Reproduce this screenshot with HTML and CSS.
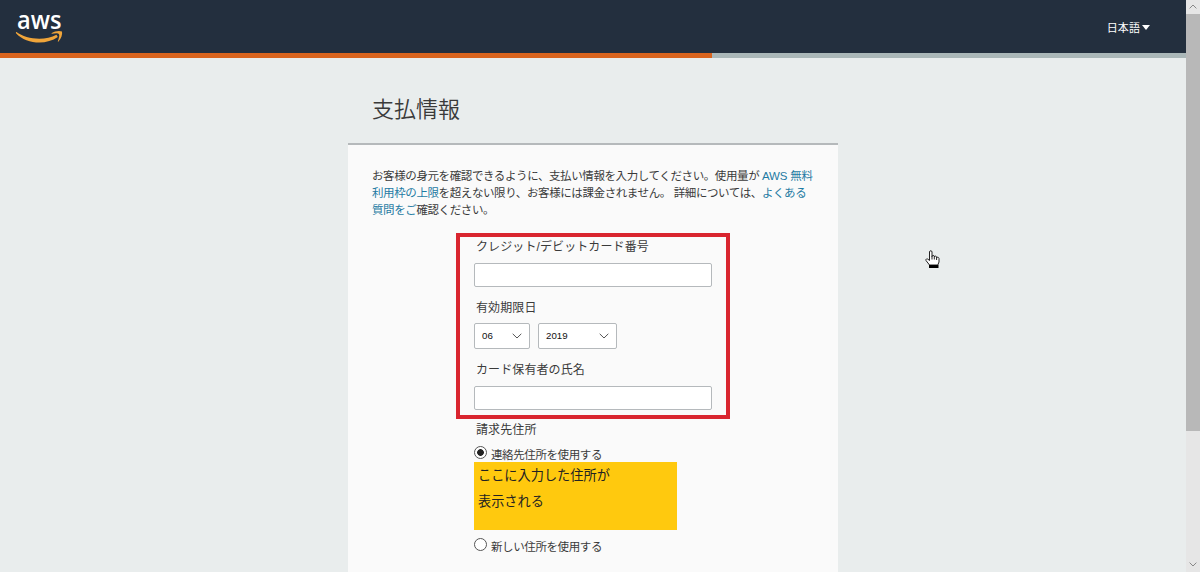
FILE: index.html
```
<!DOCTYPE html>
<html lang="ja">
<head>
    <meta charset="UTF-8">
    <title>支払情報</title>
    <link rel="stylesheet" href="styles.css">
</head>
<body>
<div class="page">
    <header class="header">
        <svg class="logo" viewBox="0 0 48 32" width="48" height="32">
            <text x="1" y="16.6" textLength="44.5" lengthAdjust="spacingAndGlyphs">aws</text>
            <path class="smile" d="M.5 20C10 27.5 29 29 40.5 22.8L41.8 25C30 33.5 10 32 0 21.2C-.2 20.4 0 19.8 .5 20Z"/>
            <path class="smile" d="M35.5 21.2C39 18.7 44 18.3 46 19.6C46.6 22.3 45.3 26.8 42.5 29.5C41.9 29.9 41.6 29.6 41.9 28.9C42.7 26.9 43.8 23.6 43 22.2C42.2 20.8 38.2 21.4 36.2 21.7C35.5 21.8 35.2 21.5 35.5 21.2Z"/>
        </svg>
        <div class="language">日本語<span class="caret"></span></div>
    </header>
    <div class="progress"><div class="progress-done" style="width: 712px"></div></div>
    <main class="content">
        <h1>支払情報</h1>
        <div class="card">
            <p class="intro">お客様の身元を確認できるように、支払い情報を入力してください。使用量が <a class="wide">AWS 無料</a><br><a>利用枠の上限</a>を超えない限り、お客様には課金されません。 詳細については、<a>よくある</a><br><a>質問をご</a>確認ください。</p>
            <form class="form">
                <label class="label">クレジット/デビットカード番号</label>
                <div class="input"></div>
                <label class="label label-date">有効期限日</label>
                <div class="selects">
                    <div class="select month">06<svg width="10" height="6" viewBox="0 0 10 6"><path d="M.7.8L5 5L9.3.8"/></svg></div>
                    <div class="select year">2019<svg width="10" height="6" viewBox="0 0 10 6"><path d="M.7.8L5 5L9.3.8"/></svg></div>
                </div>
                <label class="label label-name">カード保有者の氏名</label>
                <div class="input"></div>
                <label class="label label-address">請求先住所</label>
                <div class="radio"><span class="dot checked"></span>連絡先住所を使用する</div>
                <div class="address">ここに入力した住所が<br>表示される</div>
                <div class="radio radio-new"><span class="dot"></span>新しい住所を使用する</div>
                <div class="highlight"></div>
            </form>
        </div>
    </main>
</div>
<div class="scrollbar">
    <svg width="8" height="5" viewBox="0 0 8 5"><path d="M.6 4.4L4 1L7.4 4.4"/></svg>
    <div class="thumb"></div>
    <svg class="down" width="8" height="5" viewBox="0 0 8 5"><path d="M.6.6L4 4L7.4.6"/></svg>
</div>
<svg class="cursor" width="16" height="19" viewBox="0 0 16 19">
    <path class="hand" d="M4.5 10.5V2C4.5.3 7 .3 7 2V6.5C7 5 9.3 5 9.3 6.5V7C9.3 5.7 11.6 5.8 11.6 7.2V8C11.6 6.8 14 7 14 8.5V12L12.8 15H4.5L1 10.5C.4 9.2 2 8.2 3 9.3Z"/>
    <path class="folds" d="M7 6V9.5M9.3 6.5V9.5M11.6 7.5V10"/>
    <path d="M4 15H13.5V18H4Z"/>
</svg>
</body>
</html>
```
FILE: styles.css
```
* {
    box-sizing: border-box;
}
body {
    margin: 0;
    height: 572px;
    display: flex;
    overflow: hidden;
    background: #e9eded;
    color: #3a3a3a;
    font-family: "Liberation Sans", "Noto Sans CJK JP", sans-serif;
}
.page {
    flex: 1;
    height: 572px;
    overflow: hidden;
}
.header {
    height: 53px;
    display: flex;
    justify-content: space-between;
    align-items: flex-start;
    padding: 12px 36px 0 16px;
    background: #232f3e;
}
.logo {
    display: block;
    overflow: visible;
}
.logo text {
    font: 600 26px "Open Sans", sans-serif;
    fill: #fff;
}
.smile {
    fill: #f0a53a;
}
.language {
    display: flex;
    align-items: center;
    height: 30px;
    color: #fff;
    font-size: 11px;
    letter-spacing: 0.1px;
}
.caret {
    margin-left: 2px;
    border: 4px solid transparent;
    border-top: 5px solid #fff;
    border-bottom: 0;
}
.progress {
    height: 5px;
    background: #aab7b8;
}
.progress-done {
    height: 5px;
    background: #d9641e;
}
.content {
    width: 490px;
    margin-left: 348px;
}
h1 {
    margin: 0;
    height: 85px;
    padding: 36px 24px 0;
    font-size: 22px;
    line-height: 32px;
    font-weight: 350;
}
.card {
    height: 440px;
    padding: 23px 0 0 24px;
    border-top: 2px solid #b5b9bb;
    background: #fafafa;
}
.intro {
    margin: 0;
    font-size: 11.5px;
    line-height: 17px;
    letter-spacing: -0.4px;
    white-space: nowrap;
}
a {
    color: #1f7ba3;
}
.wide {
    letter-spacing: -0.2px;
}
.form {
    position: relative;
    width: 240px;
    margin: 19px 0 0 102px;
}
.label {
    display: block;
    height: 18px;
    margin-left: 2px;
    font-size: 12px;
    line-height: 18px;
    letter-spacing: 0.1px;
    white-space: nowrap;
}
.input {
    width: 238px;
    height: 24px;
    margin-top: 7px;
    border: 1px solid #b5b9bc;
    border-radius: 2px;
    background: #fff;
}
.label-date {
    margin-top: 12px;
}
.selects {
    display: flex;
    gap: 8px;
    margin-top: 6px;
}
.select {
    display: flex;
    justify-content: space-between;
    align-items: center;
    height: 26px;
    padding: 0 7px 1px;
    border: 1px solid #b5b9bc;
    border-radius: 2px;
    background: #fff;
    color: #111;
    font-size: 9.7px;
}
.month {
    width: 56px;
}
.year {
    width: 79px;
}
.select svg path,
.scrollbar path {
    fill: none;
    stroke: #555;
    stroke-width: 1;
}
.scrollbar path {
    stroke: #888;
}
.label-name {
    margin-top: 12px;
}
.label-address {
    margin-top: 11px;
}
.radio {
    display: flex;
    gap: 4px;
    height: 16px;
    margin-top: 7px;
    font-size: 11.5px;
    line-height: 18px;
    letter-spacing: -0.4px;
    white-space: nowrap;
}
.radio-new {
    margin-top: 8px;
}
.dot {
    width: 13px;
    height: 13px;
    border: 1px solid #555;
    border-radius: 50%;
    background: #fff;
}
.checked {
    background: radial-gradient(circle, #222 3px, #fff 3.7px);
}
.address {
    width: 203px;
    height: 68px;
    padding: 1px 4px;
    background: #ffc90e;
    color: #222;
    font-size: 13.2px;
    line-height: 26px;
}
/* red frame around the card fields */
.highlight {
    position: absolute;
    left: -18px;
    top: -5px;
    width: 274px;
    height: 186px;
    border: 4px solid #d9252f;
}
.scrollbar {
    display: flex;
    flex-direction: column;
    align-items: center;
    width: 14px;
    height: 572px;
    padding: 4px 0 5px;
    background: #e6e6e6;
}
.thumb {
    width: 14px;
    height: 417px;
    margin-top: 5px;
    background: #b8b8b8;
}
.down {
    margin-top: auto;
}
.cursor {
    position: absolute;
    left: 925px;
    top: 250px;
}
.hand {
    fill: #fff;
    stroke: #222;
}
.folds {
    fill: none;
    stroke: #222;
}
```
